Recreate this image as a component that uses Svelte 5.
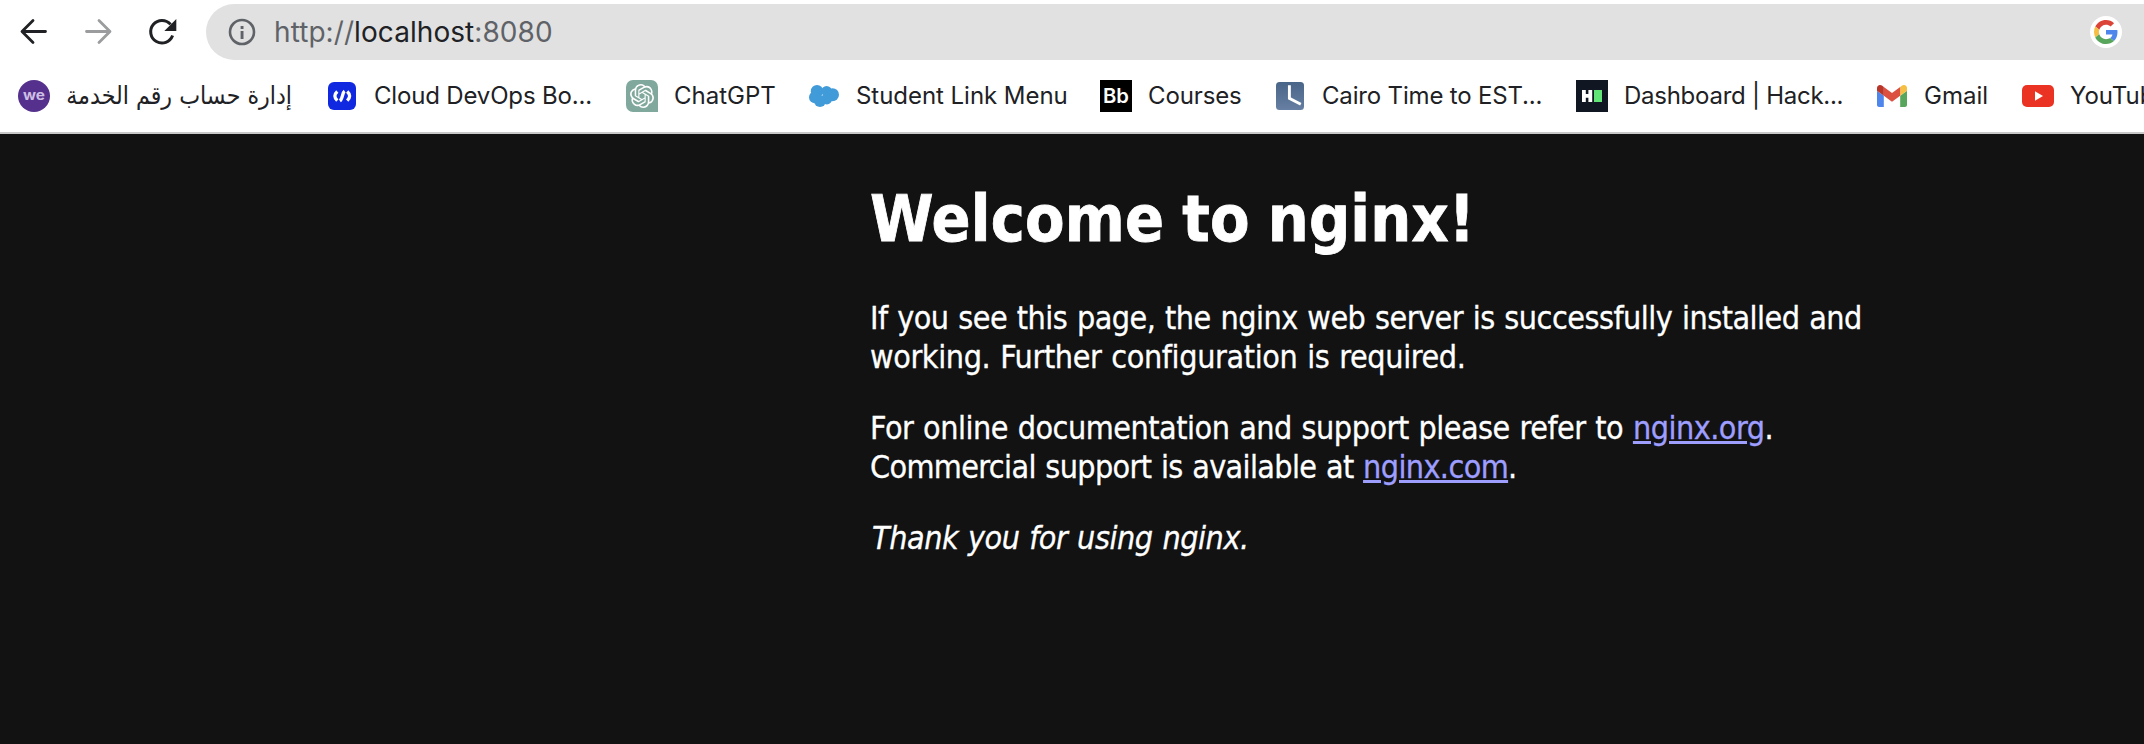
<script>
  const bookmarks = [
    { icon: 'we', label: 'إدارة حساب رقم الخدمة', width: 226, rtl: true },
    { icon: 'devops', label: 'Cloud DevOps Bo...', width: 218, spacing: -0.17 },
    { icon: 'chatgpt', label: 'ChatGPT', width: 100 },
    { icon: 'cloud', label: 'Student Link Menu', width: 210, spacing: -0.04 },
    { icon: 'bb', label: 'Courses', width: 92, spacing: -0.12 },
    { icon: 'clock', label: 'Cairo Time to EST...', width: 220, spacing: -0.17 },
    { icon: 'hack', label: 'Dashboard | Hack...', width: 218, spacing: -0.26 },
    { icon: 'gmail', label: 'Gmail', width: 64 },
    { icon: 'youtube', label: 'YouTube', width: 96 }
  ];
</script>

<div class="window">
  <header class="chrome">
    <div class="toolbar">
      <nav class="controls">
        <svg width="28" height="28" viewBox="0 0 28 28" fill="none" stroke="#202124" stroke-width="2.8" stroke-linecap="round" stroke-linejoin="round">
          <path d="M25.5 13.5H2.5M13 2.5 2 13.5l11 11" />
        </svg>
        <svg width="28" height="28" viewBox="0 0 28 28" fill="none" stroke="#9b9c9e" stroke-width="2.8" stroke-linecap="round" stroke-linejoin="round">
          <path d="M2.5 13.5h23M15 2.5l11 11-11 11" />
        </svg>
        <svg width="30" height="28" viewBox="0 0 30 28">
          <path d="M24.6 17.6A11.3 11.3 0 1 1 22.6 6.4" fill="none" stroke="#202124" stroke-width="3" />
          <path d="M28.3 1v12h-12z" fill="#202124" />
        </svg>
      </nav>
      <div class="omnibox">
        <svg width="28" height="28" viewBox="0 0 28 28">
          <circle cx="14" cy="14" r="12" fill="none" stroke="#5f6368" stroke-width="2.6" />
          <path d="M12.6 8h2.9v2.9h-2.9zM12.6 13h2.9v8h-2.9z" fill="#5f6368" />
        </svg>
        <div class="url">http://<b>localhost</b>:8080</div>
        <div class="google">
          <svg width="24" height="24" viewBox="0 0 48 48">
            <path fill="#db4437" d="M24 9.5c3.54 0 6.71 1.22 9.21 3.6l6.85-6.85C35.9 2.38 30.47 0 24 0 14.62 0 6.51 5.38 2.56 13.22l7.98 6.19C12.43 13.72 17.74 9.5 24 9.5z" />
            <path fill="#4f86ec" d="M46.98 24.55c0-1.57-.15-3.09-.38-4.55H24v9.02h12.94c-.58 2.96-2.26 5.48-4.78 7.18l7.73 6c4.51-4.18 7.09-10.36 7.09-17.65z" />
            <path fill="#f4bf42" d="M10.53 28.59c-.48-1.45-.76-2.99-.76-4.59s.27-3.14.76-4.59l-7.98-6.19C.92 16.46 0 20.12 0 24c0 3.88.92 7.54 2.56 10.78l7.97-6.19z" />
            <path fill="#58a65c" d="M24 48c6.48 0 11.93-2.13 15.89-5.81l-7.73-6c-2.15 1.45-4.92 2.3-8.16 2.3-6.26 0-11.57-4.22-13.47-9.91l-7.98 6.19C6.51 42.62 14.62 48 24 48z" />
          </svg>
        </div>
      </div>
    </div>

    <div class="bookmarks">
      {#each bookmarks as b}
        <div class="bookmark">
          <svg class="icon" width="32" height="32" viewBox="0 0 32 32">
            {#if b.icon === 'we'}
              <circle cx="16" cy="16" r="16" fill="#55318d" />
              <text x="16" y="19.8" text-anchor="middle" textLength="22" lengthAdjust="spacingAndGlyphs" class="we">we</text>
            {:else if b.icon === 'devops'}
              <rect x="2" y="2" width="28" height="28" rx="6" fill="#1029e0" />
              <path d="M11.3 11.6Q6.4 16 11.3 20.6M18.6 11.2C16 13 16.8 19 13.9 20.9M21.2 11.6Q26.1 16 21.2 20.6" fill="none" stroke="#fff" stroke-width="3.3" />
            {:else if b.icon === 'chatgpt'}
              <path d="M7 0h18a7 7 0 0 1 7 7v25H7a7 7 0 0 1-7-7V7a7 7 0 0 1 7-7z" fill="#80a89c" />
              <path transform="translate(4 4)" fill="#fff" d="M22.2819 9.8211a5.9847 5.9847 0 0 0-.5157-4.9108 6.0462 6.0462 0 0 0-6.5098-2.9A6.0651 6.0651 0 0 0 4.9807 4.1818a5.9847 5.9847 0 0 0-3.9977 2.9 6.0462 6.0462 0 0 0 .7427 7.0966 5.98 5.98 0 0 0 .511 4.9107 6.051 6.051 0 0 0 6.5146 2.9001A5.9847 5.9847 0 0 0 13.2599 24a6.0557 6.0557 0 0 0 5.7718-4.2058 5.9894 5.9894 0 0 0 3.9977-2.9001 6.0557 6.0557 0 0 0-.7475-7.0729zm-9.022 12.6081a4.4755 4.4755 0 0 1-2.8764-1.0408l.1419-.0804 4.7783-2.7582a.7948.7948 0 0 0 .3927-.6813v-6.7369l2.02 1.1686a.071.071 0 0 1 .038.052v5.5826a4.504 4.504 0 0 1-4.4945 4.4944zm-9.6607-4.1254a4.4708 4.4708 0 0 1-.5346-3.0137l.142.0852 4.783 2.7582a.7712.7712 0 0 0 .7806 0l5.8428-3.3685v2.3324a.0804.0804 0 0 1-.0332.0615L9.74 19.9502a4.4992 4.4992 0 0 1-6.1408-1.6464zM2.3408 7.8956a4.485 4.485 0 0 1 2.3655-1.9728V11.6a.7664.7664 0 0 0 .3879.6765l5.8144 3.3543-2.0201 1.1685a.0757.0757 0 0 1-.071 0l-4.8303-2.7865A4.504 4.504 0 0 1 2.3408 7.872zm16.5963 3.8558L13.1038 8.364 15.1192 7.2a.0757.0757 0 0 1 .071 0l4.8303 2.7913a4.4944 4.4944 0 0 1-.6765 8.1042v-5.6772a.79.79 0 0 0-.407-.667zm2.0107-3.0231l-.142-.0852-4.7735-2.7818a.7759.7759 0 0 0-.7854 0L9.409 9.2297V6.8974a.0662.0662 0 0 1 .0284-.0615l4.8303-2.7866a4.4992 4.4992 0 0 1 6.6802 4.66zM8.3065 12.863l-2.02-1.1638a.0804.0804 0 0 1-.038-.0567V6.0742a4.4992 4.4992 0 0 1 7.3757-3.4537l-.142.0805L8.704 5.459a.7948.7948 0 0 0-.3927.6813zm1.0976-2.3654l2.602-1.4998 2.6069 1.4998v2.9994l-2.5974 1.4997-2.6067-1.4997Z" />
            {:else if b.icon === 'cloud'}
              <g fill="#419bd9">
                <circle cx="9" cy="11.2" r="6.2" />
                <circle cx="18.6" cy="11.2" r="5.3" />
                <circle cx="24.5" cy="14.7" r="6.5" />
                <circle cx="7" cy="17.2" r="6" />
                <circle cx="12" cy="21" r="6" />
                <circle cx="18.8" cy="19" r="5.4" />
              </g>
            {:else if b.icon === 'bb'}
              <path d="M0 0h32v32H0z" />
              <text x="16" y="23" text-anchor="middle" textLength="26" lengthAdjust="spacingAndGlyphs" class="bb">Bb</text>
            {:else if b.icon === 'clock'}
              <defs>
                <linearGradient id="face" x2="0" y2="1">
                  <stop stop-color="#496588" />
                  <stop offset="1" stop-color="#667fa3" />
                </linearGradient>
              </defs>
              <rect x="2" y="2" width="28" height="28" rx="3.5" fill="url(#face)" />
              <path d="M15.4 5.2v13.2l11.4 5.8" fill="none" stroke="#fff" stroke-width="2.9" />
            {:else if b.icon === 'hack'}
              <path d="M0 0h32v32H0z" fill="#101722" />
              <path d="M6 10h3.8v4h2.6v-4h3.8v12h-3.8v-4.2H9.800V22H6z" fill="#fff" />
              <path d="M18 10h8v12h-8z" fill="#62e577" />
            {:else if b.icon === 'gmail'}
              <svg x="1" y="5" width="30" height="22" viewBox="52 42 88 66" preserveAspectRatio="none">
                <path fill="#4f86ec" d="M58 108h14V74L52 59v43c0 3.32 2.69 6 6 6" />
                <path fill="#58a65c" d="M120 108h14c3.32 0 6-2.69 6-6V59l-20 15" />
                <path fill="#f4bf42" d="M120 48v26l20-15v-8c0-7.42-8.47-11.65-14.4-7.2" />
                <path fill="#db5040" d="M72 74V48l24 18 24-18v26L96 92" />
                <path fill="#b93529" d="M52 51v8l20 15V48l-5.6-4.2c-5.94-4.45-14.4-.22-14.4 7.2" />
              </svg>
            {:else}
              <rect y="5" width="32" height="22" rx="5" fill="#eb3323" />
              <path d="m13 11.300 8 4.700-8 4.700z" fill="#fff" />
            {/if}
          </svg>
          <span class="label" class:rtl={b.rtl} dir={b.rtl ? 'rtl' : 'ltr'} style="width:{b.width}px;letter-spacing:{b.spacing ?? 0}px">{b.label}</span>
        </div>
      {/each}
    </div>
  </header>

  <main>
    <h1>Welcome to nginx!</h1>
    <p>
      <span class="l1">If you see this page, the nginx web server is successfully installed and</span><br />
      <span class="l2">working. Further configuration is required.</span>
    </p>
    <p>
      <span class="l3">For online documentation and support please refer to{' '}</span><a class="org" href="#org">nginx.org</a>.<br />
      <span class="l4">Commercial support is available at{' '}</span><a href="#com">nginx.com</a>.
    </p>
    <p><em>Thank you for using nginx.</em></p>
  </main>
</div>

<style>
  :global(body) {
    background: #121212;
  }
  .window {
    height: 744px;
    overflow: hidden;
    display: flex;
    flex-direction: column;
    background: #121212;
  }
  .chrome {
    box-sizing: border-box;
    height: 134px;
    flex: none;
    padding-top: 4px;
    background: #fff;
    border-bottom: 2px solid #c8c8c8;
    font-family: Inter, sans-serif;
    color: #202124;
  }
  svg {
    display: block;
    flex: none;
  }
  .toolbar {
    display: flex;
    height: 56px;
  }
  .controls {
    box-sizing: border-box;
    width: 206px;
    padding: 14px 0 0 20px;
    display: flex;
    gap: 36px;
    flex: none;
  }
  .omnibox {
    box-sizing: border-box;
    flex: 1;
    display: flex;
    align-items: center;
    padding: 0 22px;
    border-radius: 28px 0 0 28px;
    background: #e1e1e1;
  }
  .url {
    flex: 1;
    margin-left: 18px;
    font-size: 28px;
    line-height: 56px;
    letter-spacing: 0.07px;
    color: #5f6368;
  }
  .url b {
    font-weight: 400;
    color: #202124;
  }
  .google {
    display: grid;
    place-items: center;
    width: 32px;
    height: 32px;
    border-radius: 50%;
    background: #fff;
  }
  .bookmarks {
    display: flex;
    gap: 34px;
    padding: 20px 0 0 18px;
    overflow: hidden;
  }
  .bookmark {
    display: flex;
    flex: none;
    gap: 16px;
  }
  .label {
    font-size: 24px;
    line-height: 31px;
    white-space: nowrap;
  }
  .rtl {
    font-family: 'DejaVu Sans Condensed', 'DejaVu Sans', sans-serif;
    font-size: 24.7px;
  }
  .we {
    font: 700 13px Inter, sans-serif;
    fill: #cdbfe3;
  }
  .bb {
    font: 600 20px Inter, sans-serif;
    fill: #fff;
  }
  main {
    padding: 46px 0 0 870px;
    font: 32px/39px 'DejaVu Sans Condensed', 'DejaVu Sans', sans-serif;
    color: #fff;
    white-space: nowrap;
    word-spacing: 1px;
  }
  h1 {
    margin: 0 0 41px;
    font-size: 64px;
    line-height: 78px;
    letter-spacing: 0.2px;
    word-spacing: -2.2px;
    -webkit-text-stroke: 0.8px;
  }
  p {
    margin: 0 0 32px;
    -webkit-text-stroke: 0.3px;
  }
  .l1 {
    letter-spacing: -0.507px;
  }
  .l2 {
    letter-spacing: -0.37px;
  }
  .l3 {
    letter-spacing: -0.48px;
  }
  .l4 {
    letter-spacing: -0.634px;
  }
  em {
    padding-left: 2px;
    letter-spacing: -0.44px;
  }
  a {
    color: #9e9eff;
    letter-spacing: -0.6px;
    text-decoration-thickness: 3px;
    text-underline-offset: 2px;
  }
  .org {
    letter-spacing: -0.5px;
  }
</style>
